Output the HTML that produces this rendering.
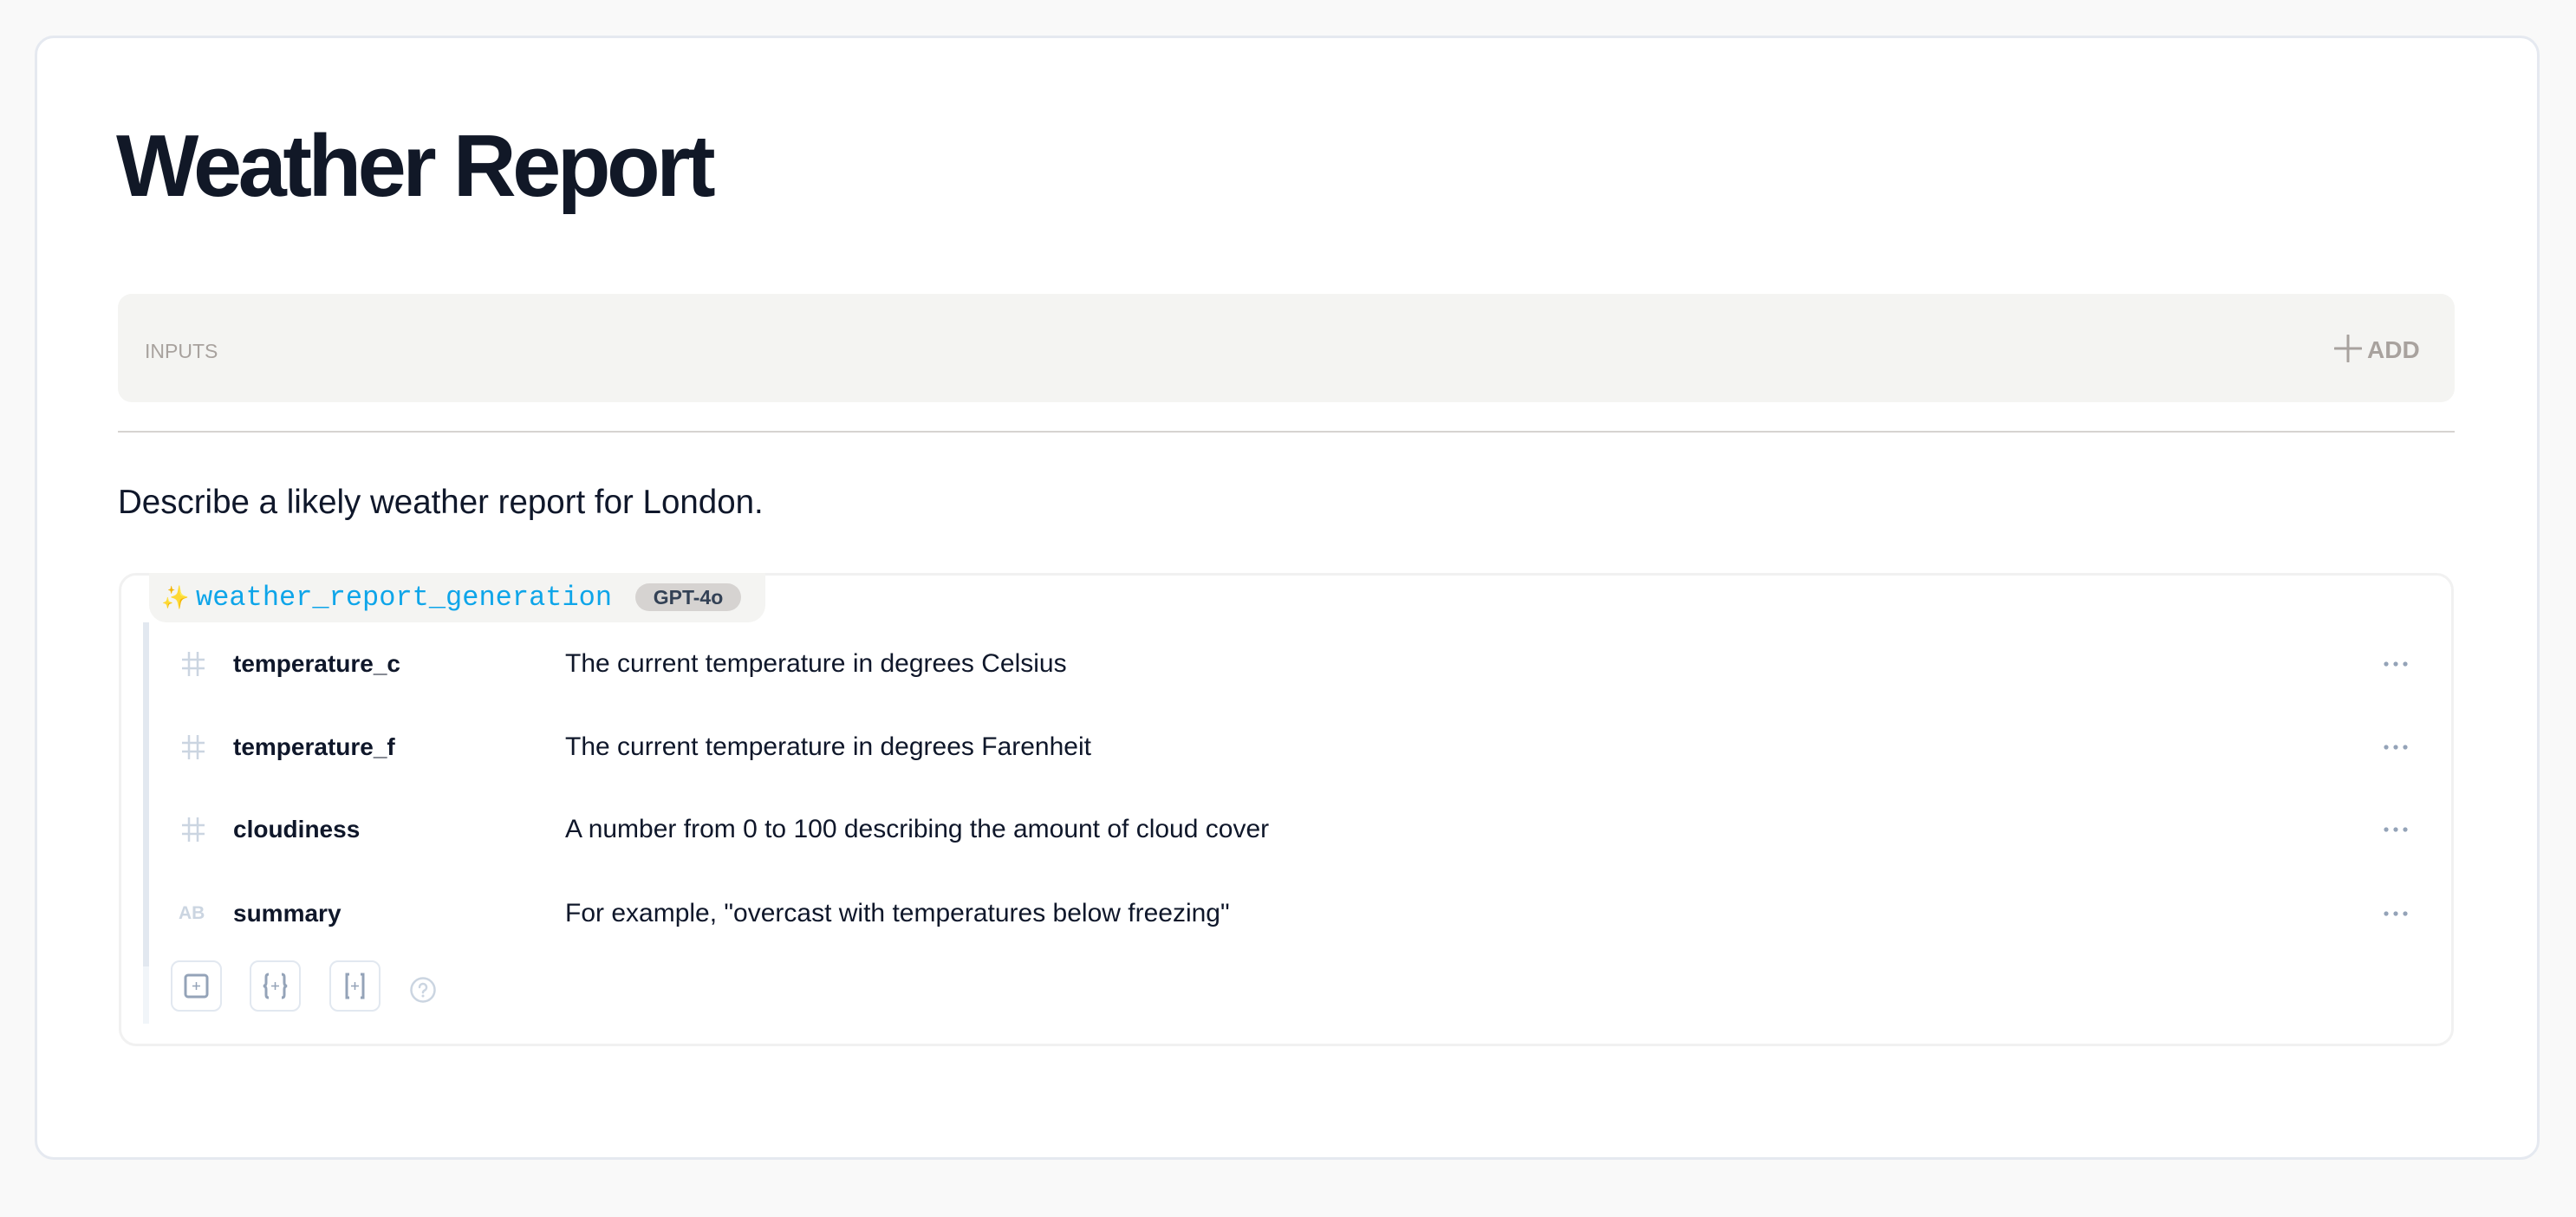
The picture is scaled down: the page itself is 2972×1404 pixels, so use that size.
<!DOCTYPE html>
<html><head><meta charset="utf-8"><style>
*{margin:0;padding:0;box-sizing:border-box}
body{width:2972px;height:1404px;background:#f9f9f9;position:relative;font-family:"Liberation Sans",sans-serif;overflow:hidden}
.abs{position:absolute}
.card{left:40px;top:41px;width:2890px;height:1297px;background:#fff;border:3px solid #e5e9f0;border-radius:22px}
.title{left:134px;top:142px;font-size:101px;font-weight:bold;color:#111827;letter-spacing:-4.5px;line-height:1}
.inputs{left:136px;top:339px;width:2696px;height:125px;background:#f4f4f2;border-radius:16px}
.lbl{left:167px;top:394px;font-size:23px;color:#a8a29e;line-height:1}
.add{left:2693px;top:386px;font-size:28px;font-weight:bold;color:#a8a29e;line-height:32px}
.div{left:136px;top:497px;width:2696px;height:2px;background:#d6d3d1}
.desc{left:136px;top:558px;font-size:38.5px;color:#0f172a;line-height:44px}
.inner{left:137px;top:661px;width:2694px;height:546px;border:3px solid #f1f1f1;border-radius:20px}
.tab{left:172px;top:661px;width:711px;height:57px;background:#f4f4f2;border-radius:0 0 20px 20px}
.fn{left:226px;top:672px;font-family:"Liberation Mono",monospace;font-size:32px;color:#0ea5e9;line-height:36px}
.pill{left:733px;top:673px;width:122px;height:32px;background:#d6d3d1;border-radius:16px;font-size:23px;font-weight:bold;color:#334155;text-align:center;line-height:32px}
.bar{left:165px;top:718px;width:7px;height:397px;background:#e2e8f0}
.bar2{left:165px;top:1115px;width:7px;height:66px;background:#f1f5f9}
.name{left:269px;font-size:28px;color:#0f172a;font-weight:bold;line-height:34px}
.dsc{left:652px;font-size:30px;color:#0f172a;line-height:34px}
.hash{left:207px;width:32px;height:34px}
.dots{left:2750px;width:28px;height:6px}
.btn{top:1108px;width:59px;height:59px;border:2px solid #e2e8f0;border-radius:10px}
</style></head><body>
<div class="abs card"></div>
<div class="abs title">Weather Report</div>
<div class="abs inputs"></div>
<div class="abs lbl">INPUTS</div>
<div class="abs add"><svg width="32" height="32" viewBox="0 0 32 32" style="vertical-align:-5px;margin-right:6px"><path d="M16 1V31M1 16H31" stroke="#a8a29e" stroke-width="3" stroke-linecap="round"/></svg>ADD</div>
<div class="abs div"></div>
<div class="abs desc">Describe a likely weather report for London.</div>
<div class="abs inner"></div>
<div class="abs tab"></div>
<div class="abs" style="left:186px;top:674px;font-size:26px;color:#facc15">✨</div>
<div class="abs fn">weather_report_generation</div>
<div class="abs pill">GPT-4o</div>
<div class="abs bar"></div><div class="abs bar2"></div>

<svg class="abs hash" style="top:749px" viewBox="0 0 32 34"><path d="M11 3v28M21 3v28M3 12h26M3 22h26" stroke="#cbd5e1" stroke-width="2.5"/></svg>
<div class="abs name" style="top:749px">temperature_c</div>
<div class="abs dsc" style="top:749px">The current temperature in degrees Celsius</div>
<svg class="abs dots" style="top:763px" viewBox="0 0 28 6"><circle cx="3" cy="3" r="2.6" fill="#94a3b8"/><circle cx="14" cy="3" r="2.6" fill="#94a3b8"/><circle cx="25" cy="3" r="2.6" fill="#94a3b8"/></svg>

<svg class="abs hash" style="top:845px" viewBox="0 0 32 34"><path d="M11 3v28M21 3v28M3 12h26M3 22h26" stroke="#cbd5e1" stroke-width="2.5"/></svg>
<div class="abs name" style="top:845px">temperature_f</div>
<div class="abs dsc" style="top:845px">The current temperature in degrees Farenheit</div>
<svg class="abs dots" style="top:859px" viewBox="0 0 28 6"><circle cx="3" cy="3" r="2.6" fill="#94a3b8"/><circle cx="14" cy="3" r="2.6" fill="#94a3b8"/><circle cx="25" cy="3" r="2.6" fill="#94a3b8"/></svg>

<svg class="abs hash" style="top:940px" viewBox="0 0 32 34"><path d="M11 3v28M21 3v28M3 12h26M3 22h26" stroke="#cbd5e1" stroke-width="2.5"/></svg>
<div class="abs name" style="top:940px">cloudiness</div>
<div class="abs dsc" style="top:940px">A number from 0 to 100 describing the amount of cloud cover</div>
<svg class="abs dots" style="top:954px" viewBox="0 0 28 6"><circle cx="3" cy="3" r="2.6" fill="#94a3b8"/><circle cx="14" cy="3" r="2.6" fill="#94a3b8"/><circle cx="25" cy="3" r="2.6" fill="#94a3b8"/></svg>

<div class="abs" style="left:206px;top:1042px;font-size:21px;font-weight:bold;color:#cbd5e1;line-height:24px">AB</div>
<div class="abs name" style="top:1037px">summary</div>
<div class="abs dsc" style="top:1037px">For example, "overcast with temperatures below freezing"</div>
<svg class="abs dots" style="top:1051px" viewBox="0 0 28 6"><circle cx="3" cy="3" r="2.6" fill="#94a3b8"/><circle cx="14" cy="3" r="2.6" fill="#94a3b8"/><circle cx="25" cy="3" r="2.6" fill="#94a3b8"/></svg>

<div class="abs btn" style="left:197px"><svg width="55" height="55" viewBox="0 0 55 55"><rect x="15" y="15" width="25" height="25" rx="3" fill="none" stroke="#94a3b8" stroke-width="3"/><path d="M27.5 23v9M23 27.5h9" stroke="#94a3b8" stroke-width="1.5"/></svg></div>
<div class="abs btn" style="left:288px"><svg width="55" height="55" viewBox="0 0 55 55"><path d="M20 14q-3 0-3 3v7q0 3-3 3.5q3 .5 3 3.5v7q0 3 3 3M35 14q3 0 3 3v7q0 3 3 3.5q-3 .5-3 3.5v7q0 3-3 3" fill="none" stroke="#94a3b8" stroke-width="3"/><path d="M27.5 23v9M23 27.5h9" stroke="#94a3b8" stroke-width="1.5"/></svg></div>
<div class="abs btn" style="left:380px"><svg width="55" height="55" viewBox="0 0 55 55"><path d="M21 14h-3v27h3M34 14h3v27h-3" fill="none" stroke="#94a3b8" stroke-width="3"/><path d="M27.5 23v9M23 27.5h9" stroke="#94a3b8" stroke-width="1.5"/></svg></div>
<svg class="abs" style="left:472px;top:1126px" width="32" height="32" viewBox="0 0 32 32"><circle cx="16" cy="16" r="13.5" fill="none" stroke="#cbd5e1" stroke-width="2.5"/><path d="M12 13a4 4 0 1 1 5.5 3.7c-1 .5-1.5 1-1.5 2.3" fill="none" stroke="#cbd5e1" stroke-width="2.5" stroke-linecap="round"/><circle cx="16" cy="23" r="1.5" fill="#cbd5e1"/></svg>
</body></html>
